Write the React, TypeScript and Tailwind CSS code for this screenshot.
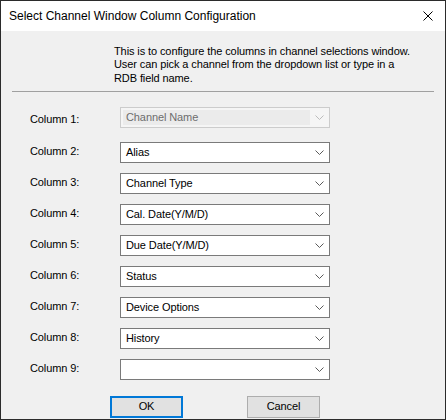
import React from "react";

const Chevron = ({ disabled }: { disabled?: boolean }) => (
  <svg width="9" height="5" viewBox="0 0 9 5" className="shrink-0">
    <path d="M0.5 0.5 L4.5 4.5 L8.5 0.5" fill="none" stroke={disabled ? "#bcbcbc" : "#5a5a5a"} strokeWidth="1" />
  </svg>
);

const rows = [
  "Alias",
  "Channel Type",
  "Cal. Date(Y/M/D)",
  "Due Date(Y/M/D)",
  "Status",
  "Device Options",
  "History",
  "",
];

export default function App() {
  return (
    <div className="w-[446px] h-[420px] border border-[#2b2b2b] bg-[#f0f0f0] flex flex-col font-['Liberation_Sans',Arial,sans-serif] text-[11px] tracking-[-0.1px] text-black overflow-hidden">
      <div className="h-[30px] bg-white flex items-center pl-[8px] shrink-0">
        <span className="leading-[15px] mt-[1px] text-[12px] tracking-normal">Select Channel Window Column Configuration</span>
        <svg width="10" height="10" viewBox="0 0 10 10" className="ml-auto mr-[12px]">
          <path d="M0.5 0.5 L9.5 9.5 M9.5 0.5 L0.5 9.5" stroke="#000" strokeWidth="1" fill="none" />
        </svg>
      </div>
      <div className="flex-1 flex flex-col">
        <div className="pt-[14px] pl-[113px] leading-[13.33px] whitespace-nowrap">
          This is to configure the columns in channel selections window.
          <br />
          User can pick a channel from the dropdown list or type in a
          <br />
          RDB field name.
        </div>
        <div className="mt-[6px] mx-[11px] h-px bg-[#a0a0a0]" />
        <div className="mt-[15px] flex pl-[29px]">
          <div className="w-[90px] mt-[5px] leading-[15px]">Column 1:</div>
          <div className="w-[210px] h-[21px] border border-[#cccccc] bg-[#f5f5f5] flex items-center pl-[2px] pr-[5px]">
            <div className="w-[187px] h-[15px] bg-[#ebebeb] pl-[3px] leading-[15px] text-[#6d6d6d]">Channel Name</div>
            <div className="ml-auto">
              <Chevron disabled />
            </div>
          </div>
        </div>
        {rows.map((r, i) => (
          <div key={i} className={`flex pl-[29px] ${i === 0 ? "mt-[14px]" : "mt-[10px]"}`}>
            <div className="w-[90px] mt-[2px] leading-[15px]">Column {i + 2}:</div>
            <div className="w-[210px] h-[21px] border border-[#7a7a7a] bg-white flex items-center pl-[5px] pr-[5px]">
              <span className="leading-[15px] mt-[1px]">{r}</span>
              <div className="ml-auto">
                <Chevron />
              </div>
            </div>
          </div>
        ))}
        <div className="mt-[16px] flex pl-[109px] gap-[64px]">
          <div className="w-[73px] h-[22px] border-2 border-[#0078d7] bg-[#e1e1e1] flex items-center justify-center leading-[15px]">
            OK
          </div>
          <div className="w-[73px] h-[22px] border border-[#adadad] bg-[#e1e1e1] flex items-center justify-center leading-[15px]">
            Cancel
          </div>
        </div>
      </div>
    </div>
  );
}
